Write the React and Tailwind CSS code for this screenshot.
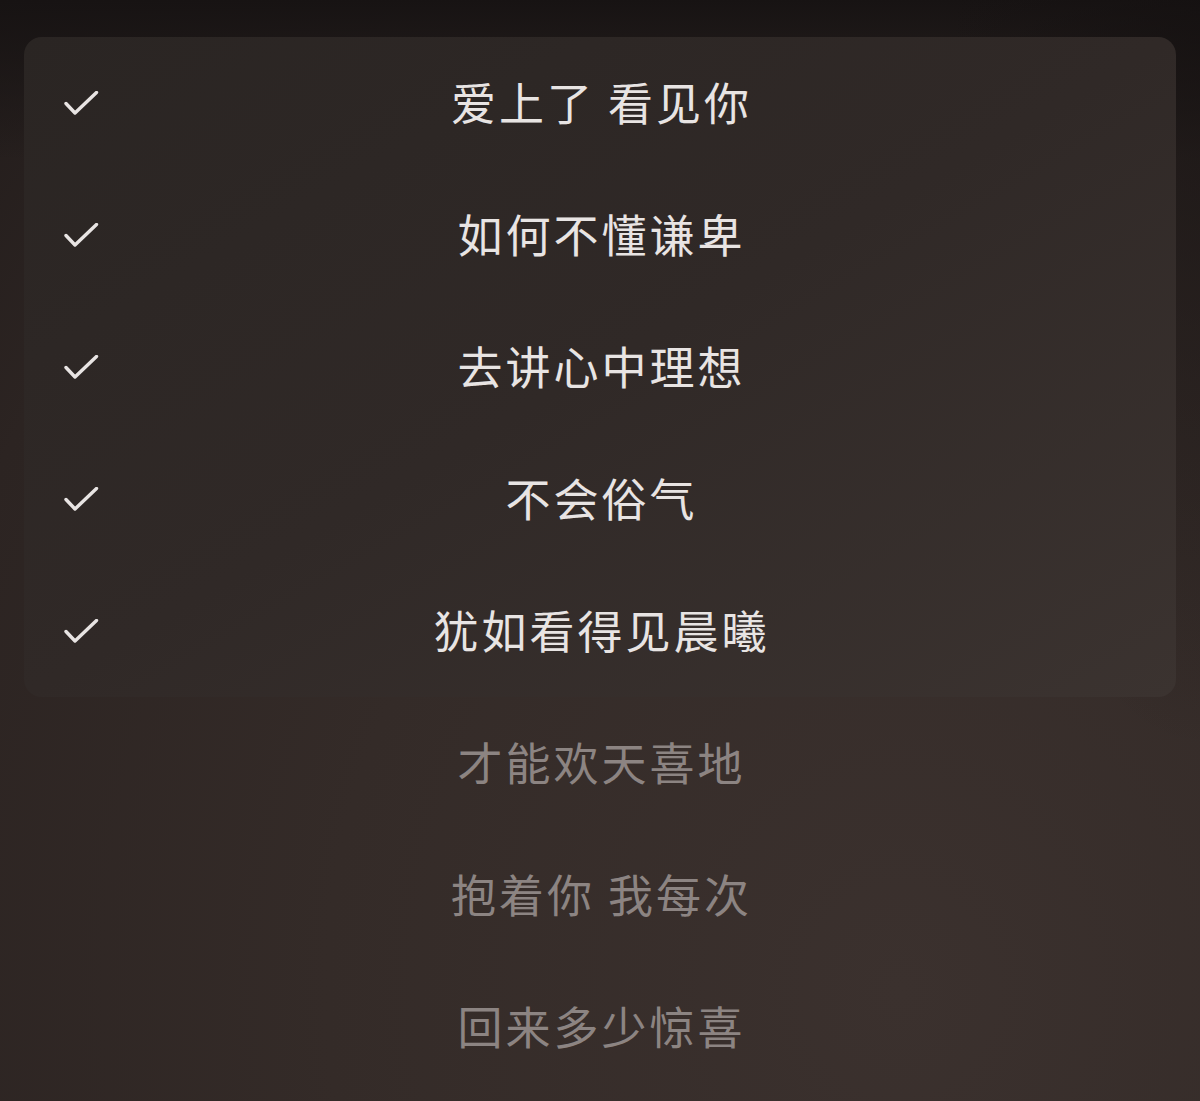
import React from 'react';

const done = ['爱上了 看见你', '如何不懂谦卑', '去讲心中理想', '不会俗气', '犹如看得见晨曦'];
const next = ['才能欢天喜地', '抱着你 我每次', '回来多少惊喜'];

const Check = () => (
    <svg width="36" height="28" viewBox="0 0 36 28" fill="none" className="absolute left-[39px] top-1/2 -translate-y-1/2 mt-[2px]">
        <path d="M3 12.5 L12 22 L33.5 1.5" stroke="#e8e4e3" strokeWidth="3.4" strokeLinecap="round" strokeLinejoin="round" />
    </svg>
);

export default function App() {
    return (
        <div
            className="relative w-[1200px] h-[1101px] overflow-hidden bg-[#2f2725]"
            style={{ fontFamily: '"Noto Sans CJK SC", "Noto Sans", sans-serif' }}
        >
            {/* background wash */}
            <div className="absolute inset-0 bg-[radial-gradient(ellipse_at_75%_90%,#3b312e_0%,#342b28_45%,#2c2422_80%,#221c1b_100%)]"></div>
            <div className="absolute inset-x-0 top-0 h-[160px] bg-gradient-to-b from-[#171313] to-transparent"></div>
            <div className="absolute inset-0 bg-[radial-gradient(ellipse_250px_750px_at_100%_0%,rgba(21,17,17,0.75),transparent)]"></div>

            <div className="relative pt-[37px]">
                <div className="mx-[24px] rounded-[18px] bg-gradient-to-br from-[#2a2523] via-[#302927] to-[#3b3330]">
                    {done.map((line) => (
                        <div key={line} className="relative h-[132px] flex items-center justify-center">
                            <Check />
                            <span className="text-[45px] tracking-[3px] text-[#e8e4e3] leading-none pl-[3px] mt-[-4px]">{line}</span>
                        </div>
                    ))}
                </div>
                <div className="mx-[24px]">
                    {next.map((line) => (
                        <div key={line} className="h-[132px] flex items-center justify-center">
                            <span className="text-[45px] tracking-[3px] text-[#8c8482] leading-none pl-[3px] mt-[-4px]">{line}</span>
                        </div>
                    ))}
                </div>
            </div>
        </div>
    );
}
